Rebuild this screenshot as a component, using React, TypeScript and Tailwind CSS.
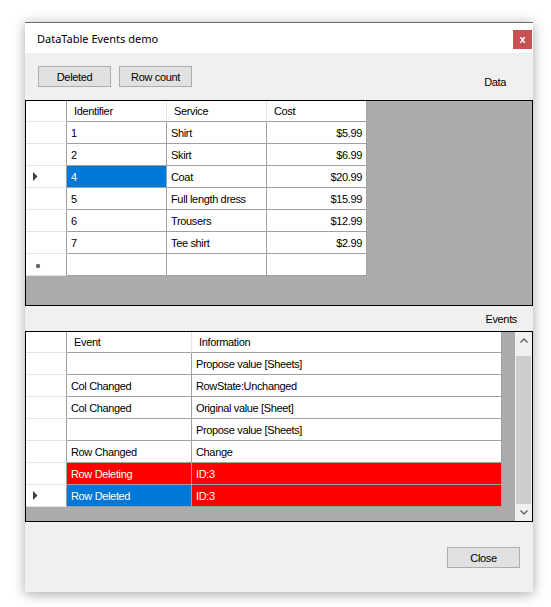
import React from "react";

type Col = { key: string; title: string; width: string; align?: "right" };

const dataCols: Col[] = [
  { key: "id", title: "Identifier", width: "w-[100px]" },
  { key: "service", title: "Service", width: "w-[100px]" },
  { key: "cost", title: "Cost", width: "w-[100px]", align: "right" },
];

const dataRows = [
  { id: "1", service: "Shirt", cost: "$5.99" },
  { id: "2", service: "Skirt", cost: "$6.99" },
  { id: "4", service: "Coat", cost: "$20.99", current: true },
  { id: "5", service: "Full length dress", cost: "$15.99" },
  { id: "6", service: "Trousers", cost: "$12.99" },
  { id: "7", service: "Tee shirt", cost: "$2.99" },
];

const eventCols: Col[] = [
  { key: "event", title: "Event", width: "w-[125px]" },
  { key: "info", title: "Information", width: "w-[310px]" },
];

const eventRows = [
  { event: "", info: "Propose value [Sheets]" },
  { event: "Col Changed", info: "RowState:Unchanged" },
  { event: "Col Changed", info: "Original value [Sheet]" },
  { event: "", info: "Propose value [Sheets]" },
  { event: "Row Changed", info: "Change" },
  { event: "Row Deleting", info: "ID:3", red: true },
  { event: "Row Deleted", info: "ID:3", red: true, current: true },
];

function RowArrow() {
  return (
    <svg width="5" height="9" viewBox="0 0 5 9" className="ml-[7px]">
      <polygon points="0,0 4.5,4.5 0,9" fill="#404040" />
    </svg>
  );
}

function NewRowMark() {
  return (
    <svg width="6" height="6" viewBox="0 0 6 6" className="ml-[9px] mt-[2px]">
      <circle cx="3" cy="3" r="2.2" fill="#6a6a6a" />
    </svg>
  );
}

function RowHeader({ children }: { children?: React.ReactNode }) {
  return (
    <div className="w-[41px] h-full shrink-0 bg-white border-r border-r-[#a0a0a0] border-b border-b-[#e4e4e4] flex items-center">
      {children}
    </div>
  );
}

function HeaderRow({ cols }: { cols: Col[] }) {
  return (
    <div className="flex h-[21px] shrink-0">
      <div className="w-[41px] h-full bg-white border-r border-r-[#a0a0a0] border-b border-b-[#e4e4e4]" />
      {cols.map((c, i) => (
        <div
          key={c.key}
          className={`${c.width} h-full bg-white border-b border-b-[#a0a0a0] flex items-center pl-[7px] pt-[1px] ${
            i === cols.length - 1 ? "border-r border-r-[#a0a0a0]" : "border-r border-r-[#e4e4e4]"
          }`}
        >
          {c.title}
        </div>
      ))}
    </div>
  );
}

function Cell({
  width,
  align,
  bg,
  children,
}: {
  width: string;
  align?: "right";
  bg: string;
  children?: React.ReactNode;
}) {
  return (
    <div
      className={`${width} h-full shrink-0 border-r border-b border-[#a0a0a0] flex items-center px-[4px] pt-[1px] whitespace-nowrap ${
        align === "right" ? "justify-end" : ""
      } ${bg}`}
    >
      {children}
    </div>
  );
}

function Button({ label }: { label: string }) {
  return (
    <button className="w-[73px] h-[21px] bg-[#e1e1e1] border border-[#adadad] text-[11px] text-black leading-none flex items-center justify-center pt-[1px]">
      {label}
    </button>
  );
}

function Chevron({ up }: { up?: boolean }) {
  return (
    <svg width="8" height="5" viewBox="0 0 8 5">
      <polyline
        points={up ? "0.5,4.5 4,1 7.5,4.5" : "0.5,0.5 4,4 7.5,0.5"}
        fill="none"
        stroke="#606060"
        strokeWidth="1.4"
      />
    </svg>
  );
}

export default function App() {
  return (
    <div className="min-h-screen bg-white pt-[22px] pl-[25px] font-['Liberation_Sans',Arial,sans-serif] text-[11px] tracking-[-0.35px] text-black">
      <div className="w-[508px] h-[570px] flex flex-col bg-[#f0f0f0] border-t border-[#6b6b6b] shadow-[0_2px_12px_rgba(0,0,0,0.35)]">
        {/* Title bar */}
        <div className="h-[30px] bg-white flex shrink-0">
          <span className="pl-[12px] mt-[8px] text-[11px] tracking-normal font-['Noto_Sans',sans-serif] leading-[16px]">
            DataTable Events demo
          </span>
          <div className="ml-auto mr-[1px] mt-[7px] w-[19px] h-[19px] bg-[#c75050] text-white font-bold text-[11px] tracking-normal leading-none flex items-center justify-center pb-[1px]">
            x
          </div>
        </div>

        {/* Toolbar */}
        <div className="flex mt-[13px] pl-[13px] gap-[8px] h-[21px] shrink-0">
          <Button label="Deleted" />
          <Button label="Row count" />
          <span className="ml-auto mr-[27px] mt-[10px] leading-[13px]">Data</span>
        </div>

        {/* Data grid */}
        <div className="mt-[13px] h-[206px] border border-black bg-[#ababab] flex flex-col shrink-0">
          <HeaderRow cols={dataCols} />
          {dataRows.map((r) => (
            <div key={r.id} className="flex h-[22px] shrink-0">
              <RowHeader>{r.current && <RowArrow />}</RowHeader>
              <Cell width="w-[100px]" bg={r.current ? "bg-[#0078d7] text-white" : "bg-white"}>
                {r.id}
              </Cell>
              <Cell width="w-[100px]" bg="bg-white">
                {r.service}
              </Cell>
              <Cell width="w-[100px]" align="right" bg="bg-white">
                {r.cost}
              </Cell>
            </div>
          ))}
          <div className="flex h-[22px] shrink-0">
            <RowHeader>
              <NewRowMark />
            </RowHeader>
            <Cell width="w-[100px]" bg="bg-white" />
            <Cell width="w-[100px]" bg="bg-white" />
            <Cell width="w-[100px]" bg="bg-white" />
          </div>
        </div>

        {/* Events label */}
        <div className="h-[25px] flex items-center justify-end pr-[16px] pt-[1px] shrink-0 leading-[13px]">Events</div>

        {/* Events grid */}
        <div className="h-[191px] border border-black bg-[#ababab] flex shrink-0">
          <div className="flex flex-col">
            <HeaderRow cols={eventCols} />
            {eventRows.map((r, i) => (
              <div key={i} className="flex h-[22px] shrink-0">
                <RowHeader>{r.current && <RowArrow />}</RowHeader>
                <Cell
                  width="w-[125px]"
                  bg={r.current ? "bg-[#0078d7] text-white" : r.red ? "bg-[#ff0000] text-white" : "bg-white"}
                >
                  {r.event}
                </Cell>
                <Cell width="w-[310px]" bg={r.red ? "bg-[#ff0000] text-white" : "bg-white"}>
                  {r.info}
                </Cell>
              </div>
            ))}
          </div>

          {/* Vertical scrollbar */}
          <div className="ml-auto w-[17px] h-full bg-[#f0f0f0] flex flex-col">
            <div className="h-[17px] flex items-center justify-center shrink-0">
              <Chevron up />
            </div>
            <div className="flex-1 flex flex-col pt-[7px] px-[1px]">
              <div className="flex-1 bg-[#cdcdcd]" />
            </div>
            <div className="h-[17px] flex items-center justify-center shrink-0">
              <Chevron />
            </div>
          </div>
        </div>

        {/* Footer */}
        <div className="flex justify-end mt-[25px] pr-[13px] shrink-0">
          <Button label="Close" />
        </div>
      </div>
    </div>
  );
}
